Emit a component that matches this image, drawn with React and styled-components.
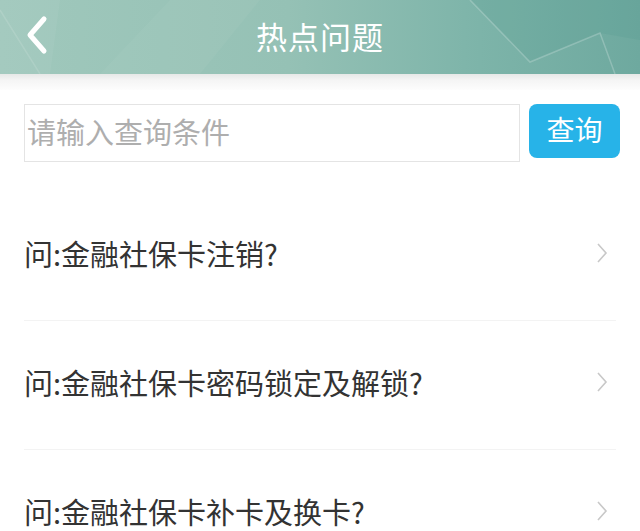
import React from "react";
import styled, { createGlobalStyle } from "styled-components";

const Global = createGlobalStyle`
  html, body { margin: 0; padding: 0; background: #fff; }
  body { font-family: "Noto Sans CJK SC", "Noto Sans", sans-serif; }
  * { box-sizing: border-box; }
`;

const Page = styled.div`
  width: 640px;
  height: 531px;
  overflow: hidden;
  background: #fff;
`;

const Header = styled.header`
  position: relative;
  height: 74px;
  background: linear-gradient(90deg, #a0c8bc 0%, #95c1b5 45%, #7db4a9 75%, #6ea99f 100%);
  display: flex;
  align-items: center;
  justify-content: center;
  overflow: hidden;
`;

const Deco = styled.svg`
  position: absolute;
  inset: 0;
  width: 100%;
  height: 100%;
`;

const BackBtn = styled.button`
  position: absolute;
  left: 22px;
  top: 14px;
  width: 30px;
  height: 42px;
  padding: 0;
  border: none;
  background: none;
`;

const Title = styled.h1`
  position: relative;
  margin: 0;
  color: #fff;
  font-size: 31px;
  font-weight: 400;
  letter-spacing: 1px;
  margin-top: -3px;
`;

const Shadow = styled.div`
  height: 16px;
  background: linear-gradient(180deg, #e6e8e7 0%, #f5f5f5 40%, #fdfdfd 100%);
`;

const SearchBar = styled.div`
  display: flex;
  align-items: flex-start;
  gap: 9px;
  padding: 14px 20px 0 24px;
`;

const Input = styled.input`
  width: 496px;
  height: 58px;
  border: 1px solid #e4e4e4;
  padding: 0 0 4px 2px;
  font-family: inherit;
  font-size: 29px;
  color: #333;
  outline: none;
  &::placeholder { color: #aeaeae; }
`;

const SearchButton = styled.button`
  width: 91px;
  height: 54px;
  border: none;
  border-radius: 8px;
  background: #27b3e8;
  color: #fff;
  font-family: inherit;
  font-size: 28px;
  padding: 0 0 4px;
`;

const List = styled.ul`
  list-style: none;
  margin: 30px 0 0;
  padding: 0 24px;
`;

const Row = styled.li`
  height: 129px;
  display: flex;
  align-items: center;
  justify-content: space-between;
  border-bottom: 1px solid ${(p) => (p.$last ? "transparent" : "#f3f3f3")};
  padding-bottom: 6px;
`;

const Question = styled.span`
  font-size: 29px;
  color: #333;
  letter-spacing: 0;
`;

const Chevron = styled.svg`
  width: 12px;
  height: 22px;
  margin-right: 8px;
`;

const items = [
  "问:金融社保卡注销?",
  "问:金融社保卡密码锁定及解锁?",
  "问:金融社保卡补卡及换卡?",
];

export default function App() {
  return (
    <Page>
      <Global />
      <Header>
        <Deco viewBox="0 0 640 74" preserveAspectRatio="none">
          <polygon points="0,0 60,0 50,74 0,74" fill="#ffffff" opacity="0.05" />
          <polygon points="100,74 170,0 260,0 200,74" fill="#ffffff" opacity="0.04" />
          <polygon points="470,0 640,0 640,40 600,33 530,62" fill="#4f958b" opacity="0.18" />
          <polyline points="470,0 530,62 600,33 615,74" fill="none" stroke="#ffffff" strokeOpacity="0.22" strokeWidth="1.5" />
          <line x1="0" y1="10" x2="40" y2="74" stroke="#ffffff" strokeOpacity="0.12" strokeWidth="1.5" />
        </Deco>
        <BackBtn aria-label="返回">
          <svg width="30" height="42" viewBox="0 0 30 42">
            <polyline points="22,5 8,21 22,37" fill="none" stroke="#fff" strokeWidth="5" strokeLinecap="round" strokeLinejoin="round" />
          </svg>
        </BackBtn>
        <Title>热点问题</Title>
      </Header>
      <Shadow />
      <SearchBar>
        <Input placeholder="请输入查询条件" />
        <SearchButton>查询</SearchButton>
      </SearchBar>
      <List>
        {items.map((t, i) => (
          <Row key={t} $last={i === items.length - 1}>
            <Question>{t}</Question>
            <Chevron viewBox="0 0 12 22">
              <polyline points="2,2 10,11 2,20" fill="none" stroke="#c8c8c8" strokeWidth="1.6" />
            </Chevron>
          </Row>
        ))}
      </List>
    </Page>
  );
}
